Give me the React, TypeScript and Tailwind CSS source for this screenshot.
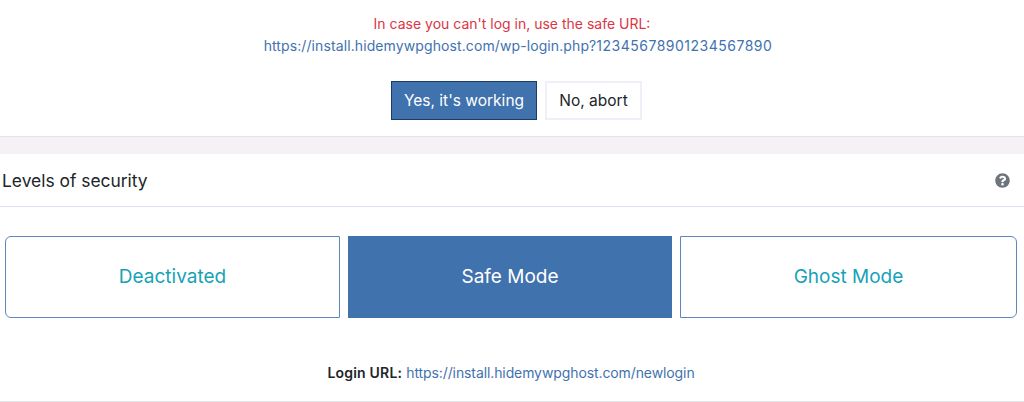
import React from "react";

const font = { fontFamily: '"Inter", "Liberation Sans", sans-serif' };

export default function App() {
  return (
    <div className="w-[1024px] h-[402px] overflow-hidden bg-white text-[#212529]" style={font}>
      <div className="h-[136px] pt-[13px] flex flex-col items-center">
        <div className="text-[14px] leading-[22px] text-[#dc3545]">In case you can't log in, use the safe URL:</div>
        <a className="ml-[12px] text-[14px] leading-[21px] text-[#3f72af] tracking-[0.1px]">
          https://install.hidemywpghost.com/wp-login.php?<span className="tracking-[0.5px]">12345678901234567890</span>
        </a>
        <div className="flex gap-2 mt-[25px] ml-[9px]">
          <button className="w-[146px] h-[39px] bg-[#4072ae] border border-[#1d3a63] text-white text-[15.5px]">Yes, it's working</button>
          <button className="w-[97px] h-[39px] bg-white border-2 border-[#eef0f8] text-[#212529] text-[15.5px]">No, abort</button>
        </div>
      </div>
      <div className="h-[18px] bg-[#f5f1f4] border-t border-[#dfe3f0]" />
      <div className="h-[53px] border-b border-[#dbe1f1] flex items-center justify-between pl-[2px] pr-[14px]">
        <div className="pt-[2px] text-[17.4px] text-[#212529]">Levels of security</div>
        <svg width="15" height="15" viewBox="0 0 512 512" fill="#6c757d">
          <path d="M504 256c0 136.997-111.043 248-248 248S8 392.997 8 256C8 119.083 119.043 8 256 8s248 111.083 248 248zM262.655 90c-54.497 0-89.255 22.957-116.549 63.758-3.536 5.286-2.353 12.415 2.715 16.258l34.699 26.31c5.205 3.947 12.621 3.008 16.665-2.122 17.864-22.658 30.113-35.797 57.303-35.797 20.429 0 45.698 13.148 45.698 32.958 0 14.976-12.363 22.667-32.534 33.976C247.128 238.528 216 254.941 216 296v4c0 6.627 5.373 12 12 12h56c6.627 0 12-5.373 12-12v-1.333c0-28.462 83.186-29.647 83.186-106.667 0-58.002-60.165-102-116.531-102zM256 338c-25.365 0-46 20.635-46 46 0 25.364 20.635 46 46 46s46-20.636 46-46c0-25.365-20.635-46-46-46z" />
        </svg>
      </div>
      <div className="flex gap-2 pl-[5px] pr-[7px] mt-[29px]">
        <div className="w-[335px] h-[82px] pt-[1px] rounded-l-[6px] border border-[#5f87bd] flex items-center justify-center text-[#17a2b8] text-[19px]">Deactivated</div>
        <div className="w-[324px] h-[82px] pt-[1px] bg-[#4072ae] flex items-center justify-center text-white text-[19px]">Safe Mode</div>
        <div className="w-[337px] h-[82px] pt-[1px] rounded-r-[6px] border border-[#5f87bd] flex items-center justify-center text-[#17a2b8] text-[19px]">Ghost Mode</div>
      </div>
      <div className="h-[84px] border-b border-[#e3e5e8] flex items-center justify-center pt-[26px] pr-[2px] text-[14px]">
        <b className="font-semibold tracking-[0.2px] mr-[4px]">Login URL:</b>
        <a className="text-[#3f72af] tracking-[-0.1px]">https://install.hidemywpghost.com/newlogin</a>
      </div>
    </div>
  );
}
